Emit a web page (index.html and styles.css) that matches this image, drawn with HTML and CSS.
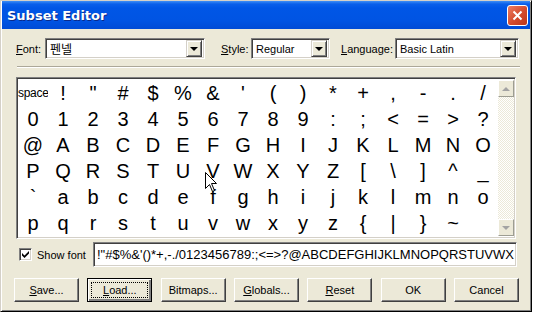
FILE: index.html
```html
<!DOCTYPE html>
<html lang="en">

<head>
    <meta charset="UTF-8">
    <title>Subset Editor</title>
    <link rel="stylesheet" href="styles.css">
</head>

<body>
    <div class="window">
        <!-- TITLE BAR -->
        <div class="titlebar">
            <span class="title">Subset Editor</span>
            <span class="close">
                <svg width="11" height="11" viewBox="0 0 11 11">
                    <path d="M1.5 1.5 L9.5 9.5 M9.5 1.5 L1.5 9.5" stroke="#fff" stroke-width="2" />
                </svg>
            </span>
        </div>

        <div class="content">
            <!-- FONT / STYLE / LANGUAGE -->
            <div class="toprow">
                <label class="lbl lbl-font"><u>F</u>ont:</label>
                <div class="combo combo-font"><span class="val ko">펜넬</span><span class="drop"></span></div>
                <label class="lbl lbl-style"><u>S</u>tyle:</label>
                <div class="combo combo-style"><span class="val">Regular</span><span class="drop"></span></div>
                <label class="lbl lbl-lang"><u>L</u>anguage:</label>
                <div class="combo combo-lang"><span class="val">Basic Latin</span><span class="drop"></span></div>
            </div>

            <div class="sep"></div>

            <!-- CHARACTER GRID -->
            <div class="charbox">
                <div class="grid">
                    <span class="cell space">space</span><span class="cell">!</span><span class="cell">"</span><span class="cell">#</span><span class="cell">$</span><span class="cell">%</span><span class="cell">&amp;</span><span class="cell">'</span><span class="cell">(</span><span class="cell">)</span><span class="cell">*</span><span class="cell">+</span><span class="cell">,</span><span class="cell">-</span><span class="cell">.</span><span class="cell">/</span>
                    <span class="cell">0</span><span class="cell">1</span><span class="cell">2</span><span class="cell">3</span><span class="cell">4</span><span class="cell">5</span><span class="cell">6</span><span class="cell">7</span><span class="cell">8</span><span class="cell">9</span><span class="cell">:</span><span class="cell">;</span><span class="cell">&lt;</span><span class="cell">=</span><span class="cell">&gt;</span><span class="cell">?</span>
                    <span class="cell">@</span><span class="cell">A</span><span class="cell">B</span><span class="cell">C</span><span class="cell">D</span><span class="cell">E</span><span class="cell">F</span><span class="cell">G</span><span class="cell">H</span><span class="cell">I</span><span class="cell">J</span><span class="cell">K</span><span class="cell">L</span><span class="cell">M</span><span class="cell">N</span><span class="cell">O</span>
                    <span class="cell">P</span><span class="cell">Q</span><span class="cell">R</span><span class="cell">S</span><span class="cell">T</span><span class="cell">U</span><span class="cell">V</span><span class="cell">W</span><span class="cell">X</span><span class="cell">Y</span><span class="cell">Z</span><span class="cell">[</span><span class="cell">\</span><span class="cell">]</span><span class="cell">^</span><span class="cell">_</span>
                    <span class="cell">`</span><span class="cell">a</span><span class="cell">b</span><span class="cell">c</span><span class="cell">d</span><span class="cell">e</span><span class="cell">f</span><span class="cell">g</span><span class="cell">h</span><span class="cell">i</span><span class="cell">j</span><span class="cell">k</span><span class="cell">l</span><span class="cell">m</span><span class="cell">n</span><span class="cell">o</span>
                    <span class="cell">p</span><span class="cell">q</span><span class="cell">r</span><span class="cell">s</span><span class="cell">t</span><span class="cell">u</span><span class="cell">v</span><span class="cell">w</span><span class="cell">x</span><span class="cell">y</span><span class="cell">z</span><span class="cell">{</span><span class="cell">|</span><span class="cell">}</span><span class="cell">~</span><span class="cell"></span>
                </div>
                <div class="scrollbar">
                    <span class="sbtn"><span class="arrow-up"></span></span>
                    <span class="track"></span>
                    <span class="sbtn"><span class="arrow-down"></span></span>
                </div>
                <!-- MOUSE POINTER -->
                <svg class="cursor" width="13" height="20" viewBox="0 0 13 20">
                    <path d="M0.5 0.5 L0.5 16.5 L4.5 12.5 L7.5 19.5 L9.5 18.5 L6.5 11.5 L11.5 11.5 Z" fill="#fff" stroke="#000" stroke-width="1" />
                </svg>
            </div>

            <!-- SHOW FONT -->
            <div class="showrow">
                <span class="check">
                    <svg width="7" height="7" viewBox="0 0 7 7">
                        <path d="M0 2 L0 4.5 L2.5 7 L7 2.5 L7 0 L2.5 4.5 Z" fill="#000" />
                    </svg>
                </span>
                <span class="showlbl">Show font</span>
                <div class="preview">!"#$%&amp;'()*+,-./0123456789:;&lt;=&gt;?@ABCDEFGHIJKLMNOPQRSTUVWX</div>
            </div>

            <!-- BUTTONS -->
            <div class="buttons">
                <span class="btn"><u>S</u>ave...</span>
                <span class="btn btn-focus"><span class="focus"><u>L</u>oad...</span></span>
                <span class="btn">Bitmaps...</span>
                <span class="btn"><u>G</u>lobals...</span>
                <span class="btn"><u>R</u>eset</span>
                <span class="btn">OK</span>
                <span class="btn">Cancel</span>
            </div>
        </div>
    </div>
</body>

</html>
```

FILE: styles.css
```css
* {
    margin: 0;
    padding: 0;
    box-sizing: border-box;
}

body {
    background: #fff;
    font-family: "Liberation Sans", Arial, sans-serif;
    font-size: 11px;
    color: #000;
}

.window {
    width: 532px;
    height: 312px;
    background: #ece9d8;
    border: 1px solid;
    border-color: #d4d0c8 #000 #000 #d4d0c8;
    box-shadow: inset 1px 1px #fff, inset -1px -1px #808080;
    padding: 0 1px 1px 1px;
    display: flex;
    flex-direction: column;
}

/* TITLE BAR */
.titlebar {
    height: 28px;
    display: flex;
    align-items: center;
    justify-content: space-between;
    padding: 0 2px 0 5px;
    background: linear-gradient(to bottom, #3d8ef6 0, #0a5fea 3px, #0056e6 7px, #0054e3 70%, #004bd6 100%);
}

.title {
    color: #fff;
    font: bold 13px "DejaVu Sans", sans-serif;
    text-shadow: 1px 1px #0b2a8a;
}

.close {
    width: 21px;
    height: 21px;
    border: 1px solid #fff;
    border-radius: 3px;
    background: linear-gradient(135deg, #ec7e63, #d34a2c 55%, #bc3619);
    display: flex;
    align-items: center;
    justify-content: center;
}

.content {
    flex: 1;
    padding: 9px 0 0 14px;
    display: flex;
    flex-direction: column;
}

/* TOP ROW */
.toprow {
    display: flex;
    align-items: center;
    height: 21px;
}

.lbl {
    white-space: nowrap;
}

.lbl-font {
    width: 29px;
}

.lbl-style {
    width: 30px;
    margin-left: 16px;
}

.lbl-lang {
    width: 54px;
    margin-left: 11px;
}

.combo {
    height: 21px;
    background: #fff;
    border: 1px solid;
    border-color: #808080 #fff #fff #808080;
    box-shadow: inset 1px 1px #404040, inset -1px -1px #d4d0c8;
    display: flex;
    align-items: center;
    justify-content: space-between;
    padding: 0 2px 0 4px;
}

.combo-font {
    width: 160px;
}

.combo-style {
    width: 79px;
}

.combo-lang {
    width: 124px;
}

.val {
    font-size: 11px;
}

.ko {
    font-family: "Noto Sans CJK KR", sans-serif;
    font-size: 12px;
}

.drop {
    width: 16px;
    height: 17px;
    background: #ece9d8;
    border: 1px solid;
    border-color: #d4d0c8 #404040 #404040 #d4d0c8;
    box-shadow: inset 1px 1px #fff, inset -1px -1px #808080;
    display: flex;
    align-items: center;
    justify-content: center;
}

.drop::after {
    content: "";
    border-left: 4px solid transparent;
    border-right: 4px solid transparent;
    border-top: 4px solid #000;
    margin-left: -1px;
}

.sep {
    margin: 7px 0 0 1px;
    width: 503px;
    border-top: 1px solid #aca899;
    border-bottom: 1px solid #fff;
}

/* CHARACTER GRID */
.charbox {
    position: relative;
    margin-top: 9px;
    width: 500px;
    height: 162px;
    background: #fff;
    border: 1px solid;
    border-color: #808080 #fff #fff #808080;
    box-shadow: inset 1px 1px #404040, inset -1px -1px #d4d0c8;
    padding: 2px 1px 2px 1px;
    display: flex;
}

.grid {
    display: grid;
    grid-template-columns: repeat(16, 30px);
    grid-auto-rows: 26px;
}

.cell {
    font-size: 20px;
    line-height: 26px;
    text-align: center;
    overflow: hidden;
    white-space: nowrap;
}

.space {
    font-size: 12px;
    letter-spacing: -0.3px;
}

.scrollbar {
    width: 16px;
    display: flex;
    flex-direction: column;
    background: repeating-conic-gradient(#fff 0 25%, #ece9d8 0 50%) 0 0 / 2px 2px;
}

.sbtn {
    height: 17px;
    background: #ece9d8;
    border: 1px solid;
    border-color: #fff #9d9d92 #9d9d92 #fff;
    display: flex;
    align-items: center;
    justify-content: center;
}

.track {
    flex: 1;
}

.arrow-up {
    border-left: 4px solid transparent;
    border-right: 4px solid transparent;
    border-bottom: 4px solid #a3a3a3;
}

.arrow-down {
    border-left: 4px solid transparent;
    border-right: 4px solid transparent;
    border-top: 4px solid #a3a3a3;
}

.cursor {
    position: absolute;
    left: 188px;
    top: 94px;
}

/* SHOW FONT ROW */
.showrow {
    margin-top: 3px;
    height: 25px;
    display: flex;
    align-items: center;
}

.check {
    width: 13px;
    height: 13px;
    margin-left: 3px;
    background: #fff;
    border: 1px solid;
    border-color: #808080 #fff #fff #808080;
    box-shadow: inset 1px 1px #404040, inset -1px -1px #d4d0c8;
    display: flex;
    align-items: center;
    justify-content: center;
}

.showlbl {
    width: 56px;
    margin-left: 5px;
}

.preview {
    width: 424px;
    height: 25px;
    background: #fff;
    border: 1px solid;
    border-color: #808080 #fff #fff #808080;
    box-shadow: inset 1px 1px #404040, inset -1px -1px #d4d0c8;
    padding: 0 2px 0 3px;
    font-size: 13px;
    line-height: 23px;
    white-space: nowrap;
    overflow: hidden;
}

/* BUTTONS */
.buttons {
    margin: 11px 0 0 -2px;
    width: 505px;
    display: flex;
    justify-content: space-between;
}

.btn {
    width: 65px;
    height: 24px;
    background: #ece9d8;
    border: 1px solid;
    border-color: #fff #404040 #404040 #fff;
    box-shadow: inset -1px -1px #808080;
    display: flex;
    align-items: center;
    justify-content: center;
}

.btn-focus {
    border-color: #000;
    box-shadow: inset 1px 1px #fff, inset -2px -2px #808080;
}

.focus {
    width: 57px;
    height: 16px;
    border: 1px dotted #000;
    display: flex;
    align-items: center;
    justify-content: center;
}
```
